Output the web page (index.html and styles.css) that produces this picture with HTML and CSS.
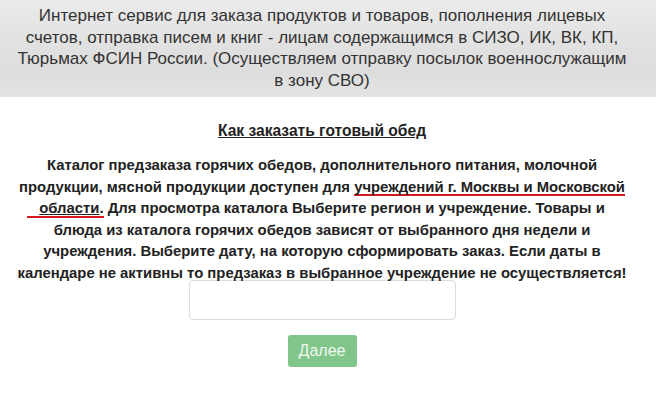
FILE: index.html
```html
<!DOCTYPE html>
<html>
<head>
<meta charset="UTF-8">
<title>Заказ обеда</title>
<link rel="stylesheet" href="styles.css">
</head>
<body>
    <div class="shapka">
        Интернет сервис для заказа продуктов и товаров, пополнения лицевых счетов, отправка писем и книг - лицам содержащимся в СИЗО, ИК, ВК, КП, Тюрьмах ФСИН России. (Осуществляем отправку посылок военнослужащим в зону СВО)
    </div>
    <div class="main">
        <div class="titel">Как заказать готовый обед</div>
        <p class="uitleg">
            Каталог предзаказа горячих обедов, дополнительного питания, молочной<br>
            продукции, мясной продукции доступен для <span class="rood">учреждений г. Москвы и Московской</span><br>
            <span class="rood2"><span class="link">области</span>.</span> Для просмотра каталога Выберите регион и учреждение. Товары и<br>
            блюда из каталога горячих обедов зависят от выбранного дня недели и<br>
            учреждения. Выберите дату, на которую сформировать заказ. Если даты в<br>
            календаре не активны то предзаказ в выбранное учреждение не осуществляется!
        </p>
        <input class="datum" type="text">
        <div>
            <button class="knop">Далее</button>
        </div>
    </div>
</body>
</html>
```

FILE: styles.css
```css
body {
    margin: 0;
    font-family: "Liberation Sans", Arial, sans-serif;
    background: #fff;
    color: #222;
}
.shapka {
    background: linear-gradient(to bottom, #ebebeb 0%, #e2e2e2 40%, #dddddd 75%, #e4e4e4 100%);
    font-size: 17px;
    line-height: 21.5px;
    color: #333;
    text-align: center;
    padding: 5px 27px 0 15px;
    height: 92px;
}
.main {
    text-align: center;
    padding: 0 24px 0 12px;
}
.titel {
    font-weight: bold;
    font-size: 15.6px;
    text-decoration: underline;
    margin-top: 25px;
}
.uitleg {
    font-weight: bold;
    font-size: 14.85px;
    line-height: 21.5px;
    margin: 15px 0 0;
}
.rood {
    text-decoration: underline;
    text-decoration-color: #d41a1a;
    text-decoration-thickness: 2px;
    text-decoration-skip-ink: none;
    text-underline-offset: 2px;
}
.rood2 {
    border-bottom: 2px solid #d41a1a;
    margin-left: -12px;
    padding-left: 12px;
}
.link {
    text-decoration: underline;
}
.datum {
    display: block;
    margin: -4px auto 0;
    width: 267px;
    height: 40px;
    box-sizing: border-box;
    border: 1px solid #dcdcdc;
    border-radius: 4px;
}
.knop {
    margin-top: 15px;
    background: #80c589;
    border: none;
    border-radius: 3px;
    color: #f0f8f0;
    font-family: "Liberation Sans", Arial, sans-serif;
    font-size: 16px;
    width: 69px;
    height: 32px;
}
```
